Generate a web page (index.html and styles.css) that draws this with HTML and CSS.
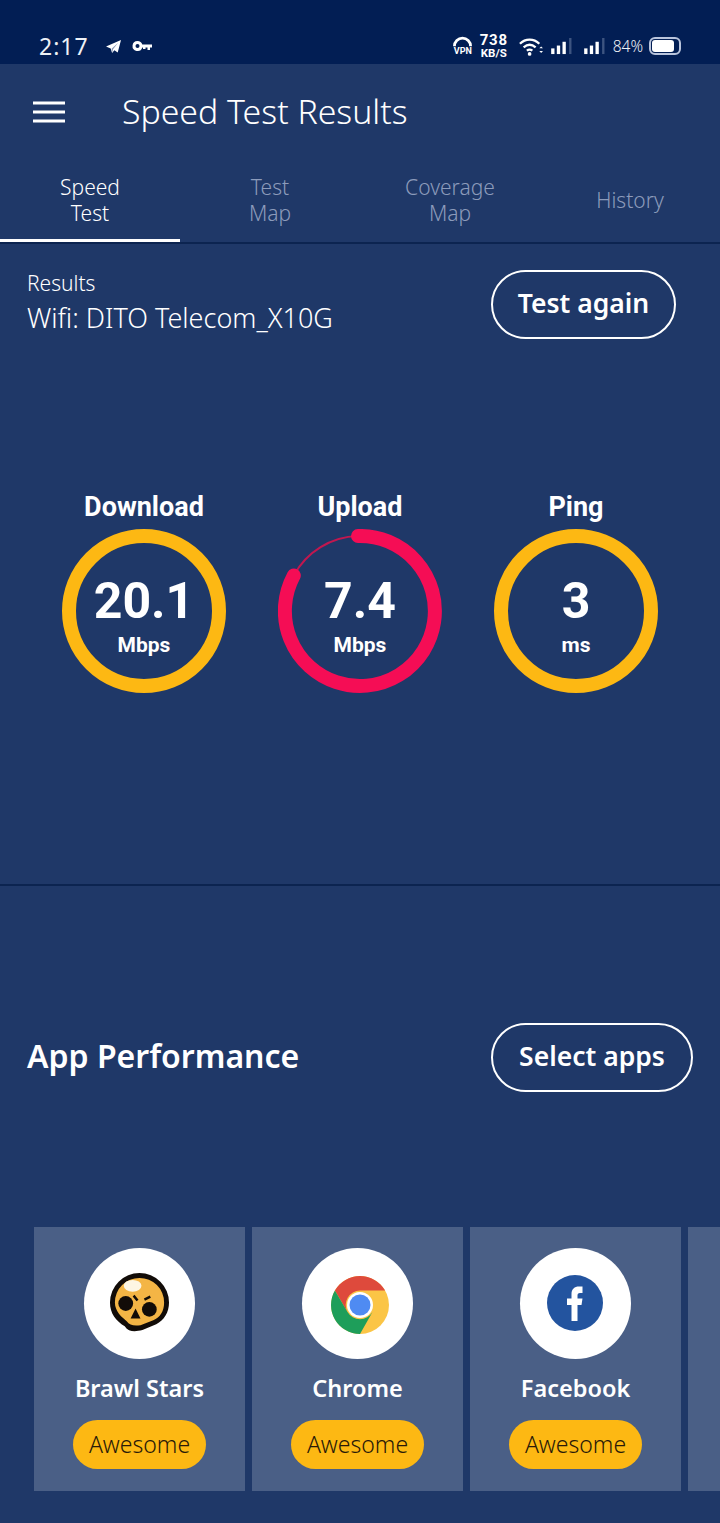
FILE: index.html
```html
<!DOCTYPE html>
<html lang="en">
<head>
<meta charset="utf-8">
<title>Speed Test Results</title>
<link rel="stylesheet" href="styles.css">
</head>
<body>
<div class="page">
  <header class="status">
    <div class="status-left">
      <span class="clock">2:17</span>
      <svg class="ic-plane" viewBox="0 0 18 16"><path d="M17 1 1 8l5 2 1.500 5 2.500-3 3.500 2.500z" fill="#fff"/><path d="M14 4 7 10.500 7.500 15 8.500 11z" fill="#8493b0"/></svg>
      <svg class="ic-key" viewBox="0 0 20 12"><path d="M5.500 1a5 5 0 0 1 4.800 3.500H20v3h-2v2.500h-2.500V7.500h-2V9H11V7.500h-.7A5 5 0 1 1 5.500 1z" fill="#fff"/><circle cx="5.500" cy="6" r="2" fill="#021e54"/></svg>
    </div>
    <div class="status-right">
      <div class="vpn">
        <svg class="ic-gauge" viewBox="0 0 20 11"><path d="M1.500 10.500a8.500 8.500 0 0 1 17 0" fill="none" stroke="#fff" stroke-width="3"/><path d="M9 10 13 4l-1 7z" fill="#021e54"/></svg>
        <span class="vpn-text">VPN</span>
      </div>
      <div class="rate"><span class="rate-num">738</span><span class="rate-unit">KB/S</span></div>
      <svg class="ic-wifi" viewBox="0 0 26 20"><g fill="none" stroke="#fff" stroke-width="2.500"><path d="M1 7c6-6 15-6 21 0"/><path d="M5 11c4-3.500 9-3.500 13 0"/><path d="M8.500 14.500c2-1.500 4-1.500 6 0"/></g><circle cx="11.500" cy="18" r="2" fill="#fff"/><path d="M22 12l2-2 2 2zM22 15l2 2 2-2z" fill="#fff"/></svg>
      <svg class="ic-signal" viewBox="0 0 24 18"><rect x="0" y="11" width="3.500" height="6" fill="#fff"/><rect x="6" y="8" width="3.500" height="9" fill="#fff"/><rect x="12" y="4" width="3.500" height="13" fill="#fff"/><rect x="19" y="0" width="2.500" height="17" fill="#3d5480"/></svg>
      <svg class="ic-signal s2" viewBox="0 0 24 18"><rect x="0" y="11" width="3.500" height="6" fill="#fff"/><rect x="6" y="8" width="3.500" height="9" fill="#fff"/><rect x="12" y="4" width="3.500" height="13" fill="#fff"/><rect x="19" y="0" width="2.500" height="17" fill="#3d5480"/></svg>
      <span class="pct">84%</span>
      <span class="battery"><span class="battery-fill"></span></span>
    </div>
  </header>

  <div class="appbar">
    <svg class="menu" viewBox="0 0 32 22"><path d="M0 2h32M0 11h32M0 20h32" stroke="#fff" stroke-width="3"/></svg>
    <h1 class="title">Speed Test Results</h1>
  </div>

  <nav class="tabs">
    <div class="tab active">Speed<br>Test</div>
    <div class="tab">Test<br>Map</div>
    <div class="tab">Coverage<br>Map</div>
    <div class="tab">History</div>
  </nav>

  <section class="results">
    <div class="results-info">
      <div class="results-label">Results</div>
      <div class="results-net">Wifi: DITO Telecom_X10G</div>
    </div>
    <button class="outline-btn again">Test again</button>
  </section>

  <section class="gauges">
    <div class="gauge">
      <div class="gauge-label">Download</div>
      <div class="dial">
        <svg class="ring" viewBox="0 0 164 164"><circle cx="82" cy="82" r="75" class="arc-amber"/></svg>
        <div class="dial-text"><span class="dial-num">20.1</span><span class="dial-unit">Mbps</span></div>
      </div>
    </div>
    <div class="gauge">
      <div class="gauge-label">Upload</div>
      <div class="dial">
        <svg class="ring" viewBox="0 0 164 164"><path d="M15.800 46.500A75 75 0 0 1 80 7" class="arc-thin"/><path d="M80 7A75 75 0 1 1 15.800 46.500" class="arc-pink"/></svg>
        <div class="dial-text"><span class="dial-num">7.4</span><span class="dial-unit">Mbps</span></div>
      </div>
    </div>
    <div class="gauge">
      <div class="gauge-label">Ping</div>
      <div class="dial">
        <svg class="ring" viewBox="0 0 164 164"><circle cx="82" cy="82" r="75" class="arc-amber"/></svg>
        <div class="dial-text"><span class="dial-num">3</span><span class="dial-unit">ms</span></div>
      </div>
    </div>
  </section>

  <section class="perf-head">
    <h2 class="perf-title">App Performance</h2>
    <button class="outline-btn select">Select apps</button>
  </section>

  <section class="cards">
    <article class="card">
      <div class="logo">
        <svg class="logo-svg brawl" viewBox="0 0 62 62">
          <path d="M31 0a30 30 0 0 1 30 30c0 10-5 18-13 22l-14 6c-8 2-14 2-18-4C7 49 1 41 1 30A30 30 0 0 1 31 0z" fill="#120c08"/>
          <path d="M31 5a25 25 0 0 1 25 25c0 9-4 15-11 18l-13 5c-7 1-11 0-14-4-5-4-12-10-12-19A25 25 0 0 1 31 5z" fill="#f4b545"/>
          <ellipse cx="24" cy="13" rx="9" ry="6" fill="#fdf6e3"/>
          <circle cx="17" cy="31" r="7.500" fill="#120c08"/>
          <circle cx="41" cy="37" r="7.500" fill="#120c08"/>
          <path d="M25 23l4 5M36 27l6-3M27 39l3 6h-6z" stroke="#120c08" stroke-width="2.500" fill="#120c08"/>
        </svg>
      </div>
      <div class="card-name">Brawl Stars</div>
      <div class="pill">Awesome</div>
    </article>
    <article class="card">
      <div class="logo chrome-box">
        <svg class="logo-svg chrome" viewBox="0 0 58 58">
          <circle cx="29" cy="29" r="29" fill="#fbc546"/>
          <path d="M3.900 14.500A29 29 0 0 1 54.100 14.500H29A14.500 14.500 0 0 0 16.500 36z" fill="#de4a3c"/>
          <path d="M3.900 14.500 16.500 36A14.500 14.500 0 0 0 41.500 36L29 58A29 29 0 0 1 3.900 14.500z" fill="#1e9e5a"/>
          <circle cx="29" cy="29" r="13" fill="#fff"/>
          <circle cx="29" cy="29" r="10.500" fill="#4f8bf2"/>
        </svg>
      </div>
      <div class="card-name">Chrome</div>
      <div class="pill">Awesome</div>
    </article>
    <article class="card">
      <div class="logo">
        <svg class="logo-svg fb" viewBox="0 0 56 56">
          <circle cx="28" cy="28" r="28" fill="#23549f"/>
          <path d="M24.500 46V30H20v-6.500h4.500V19c0-5 3-7.500 7.500-7.500h3.500V18H33c-2 0-2.500 1-2.500 2.500v3h5l-1 6.500h-4v16z" fill="#fff"/>
        </svg>
      </div>
      <div class="card-name">Facebook</div>
      <div class="pill">Awesome</div>
    </article>
    <article class="card">
      <div class="logo"></div>
      <div class="card-name">Clash Royale</div>
      <div class="pill">Awesome</div>
    </article>
  </section>
</div>
</body>
</html>
```

FILE: styles.css
```css
* { box-sizing: border-box; }
html, body { margin: 0; padding: 0; }
body { background: #1f3868; color: #fff; font-family: "Noto Sans", "Open Sans", sans-serif; }
.page { width: 720px; height: 1523px; overflow: hidden; display: flex; flex-direction: column; }

.status { height: 64px; background: #021e54; display: flex; justify-content: space-between; align-items: center; padding: 28px 39px 0 39px; flex: none; }
.status-left, .status-right { display: flex; align-items: center; }
.clock { font-size: 23px; letter-spacing: 1px; color: #eef1f6; margin-right: 16px; }
.ic-plane { width: 17px; height: 15px; margin-right: 10px; }
.ic-key { width: 20px; height: 12px; }
.vpn { width: 20px; display: flex; flex-direction: column; align-items: center; margin-right: 7px; }
.ic-gauge { width: 19px; height: 11px; }
.vpn-text { font-family: "Roboto", sans-serif; font-weight: 700; font-size: 9px; line-height: 9px; color: #fff; }
.rate { display: flex; flex-direction: column; align-items: center; margin: 0 11px 0 0; font-family: "Roboto", sans-serif; font-weight: 700; }
.rate-num { font-size: 15px; line-height: 14px; letter-spacing: .7px; }
.rate-unit { font-size: 11.500px; line-height: 12px; }
.ic-wifi { width: 24px; height: 19px; margin-right: 8px; }
.ic-signal { width: 23px; height: 17px; margin-right: 10px; }
.ic-signal.s2 { margin-right: 6px; }
.pct { font-size: 15.500px; margin-right: 6px; color: #eef1f6; font-weight: 300; }
.battery { width: 32px; height: 18px; border: 2px solid #b9c4dc; border-radius: 6px; padding: 1px; display: block; }
.battery-fill { display: block; width: 84%; height: 100%; background: #fff; border-radius: 3px; }

.appbar { height: 96px; display: flex; align-items: center; padding-left: 33px; flex: none; }
.menu { width: 32px; height: 22px; margin-right: 57px; }
.title { margin: 0 0 3px; font-size: 33.800px; font-weight: 300; }

.tabs { height: 84px; display: flex; flex: none; border-bottom: 2px solid #0c2450; }
.tab { width: 180px; height: 82px; display: flex; align-items: center; justify-content: center; text-align: center; font-size: 21px; font-weight: 300; line-height: 26px; color: #8c9bbb; padding-bottom: 2px; }
.tab.active { color: #fff; border-bottom: 3px solid #fff; padding-bottom: 0; }

.results { display: flex; justify-content: space-between; align-items: flex-start; padding: 26px 44px 0 27px; flex: none; }
.results-label { font-size: 21px; font-weight: 300; line-height: 27px; }
.results-net { font-size: 27px; font-weight: 300; line-height: 42px; }
.outline-btn { background: transparent; color: #fff; border: 2px solid #fff; border-radius: 35px; height: 69px; font-family: "Noto Sans", sans-serif; font-size: 26.500px; font-weight: 600; padding: 0 0 4px; }
.again { width: 185px; }

.gauges { display: flex; flex: none; padding: 148px 36px 0; height: 547px; border-bottom: 2px solid #0c2450; }
.gauge { width: 216px; display: flex; flex-direction: column; align-items: center; }
.gauge-label { font-family: "Roboto", sans-serif; font-weight: 700; font-size: 27px; line-height: 40px; margin-bottom: 2px; }
.dial { position: relative; width: 164px; height: 164px; }
.ring { width: 164px; height: 164px; display: block; }
.arc-amber { fill: none; stroke: #fdb813; stroke-width: 14; }
.arc-pink { fill: none; stroke: #f50d55; stroke-width: 14; stroke-linecap: round; }
.arc-thin { fill: none; stroke: #c1174f; stroke-width: 2; }
.dial-text { position: absolute; inset: 0; display: flex; flex-direction: column; align-items: center; padding-top: 42px; font-family: "Roboto", sans-serif; font-weight: 700; }
.dial-num { font-size: 50px; line-height: 60px; }
.dial-unit { font-size: 21px; line-height: 26px; margin-top: 1px; }

.perf-head { display: flex; justify-content: space-between; align-items: center; padding: 137px 27px 0 27px; flex: none; }
.perf-title { margin: 0 0 4px; font-size: 32px; font-weight: 600; }
.select { width: 202px; }

.cards { display: flex; gap: 7px; padding: 135px 0 0 34px; flex: none; }
.card { width: 211px; height: 264px; flex: none; background: #4a5f86; display: flex; flex-direction: column; align-items: center; padding-top: 21px; }
.logo { width: 111px; height: 111px; border-radius: 50%; background: #fff; display: flex; align-items: center; justify-content: center; flex: none; }
.logo-svg { display: block; }
.brawl { width: 61px; height: 61px; }
.chrome { width: 58px; height: 58px; }
.chrome-box { padding: 3px 0 0 4px; }
.fb { width: 56px; height: 56px; margin: 0 2px 2px 0; }
.card-name { font-size: 23.500px; font-weight: 600; line-height: 34px; margin-top: 12px; white-space: nowrap; }
.pill { width: 133px; height: 49px; border-radius: 25px; background: #fdb813; color: #2a1a08; font-size: 23px; font-weight: 300; display: flex; align-items: center; justify-content: center; margin-top: 15px; padding-bottom: 2px; flex: none; }
```
